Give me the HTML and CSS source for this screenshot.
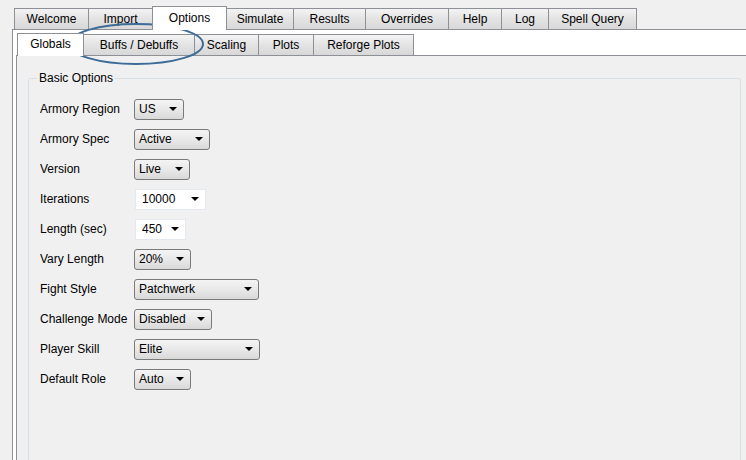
FILE: index.html
```html
<!doctype html>
<html lang="en">
	<head>
		<meta charset="UTF-8" />
		<title>Options</title>
		<link rel="stylesheet" href="styles.css">
	</head>
	<body>
		<div class="window">
			<div class="tabs">
				<div class="tab t-welcome">Welcome</div>
				<div class="tab t-import">Import</div>
				<div class="tab active t-options">Options</div>
				<div class="tab t-simulate">Simulate</div>
				<div class="tab t-results">Results</div>
				<div class="tab t-overrides">Overrides</div>
				<div class="tab t-help">Help</div>
				<div class="tab t-log">Log</div>
				<div class="tab t-spell">Spell Query</div>
			</div>

			<div class="pane">
				<div class="subtabs">
					<div class="subtab active s-globals">Globals</div>
					<div class="subtab s-buffs">Buffs / Debuffs</div>
					<div class="subtab s-scaling">Scaling</div>
					<div class="subtab s-plots">Plots</div>
					<div class="subtab s-reforge">Reforge Plots</div>
				</div>

				<div class="subpane">
					<fieldset class="group">
						<legend>Basic Options</legend>
						<div class="form">
							<div class="row"><span class="label">Armory Region</span><span class="combo w-50">US</span></div>
							<div class="row"><span class="label">Armory Spec</span><span class="combo w-76">Active</span></div>
							<div class="row"><span class="label">Version</span><span class="combo w-56">Live</span></div>
							<div class="row"><span class="label">Iterations</span><span class="combo edit w-71">10000</span></div>
							<div class="row"><span class="label">Length (sec)</span><span class="combo edit w-51">450</span></div>
							<div class="row"><span class="label">Vary Length</span><span class="combo w-57">20%</span></div>
							<div class="row"><span class="label">Fight Style</span><span class="combo w-125">Patchwerk</span></div>
							<div class="row"><span class="label">Challenge Mode</span><span class="combo w-78">Disabled</span></div>
							<div class="row"><span class="label">Player Skill</span><span class="combo w-126">Elite</span></div>
							<div class="row"><span class="label">Default Role</span><span class="combo w-57">Auto</span></div>
						</div>
					</fieldset>
				</div>
			</div>
		</div>

		<!-- annotation drawn over the screenshot -->
		<svg class="callout" width="746" height="460" viewBox="0 0 746 460">
			<ellipse cx="136" cy="44" rx="67" ry="20" fill="none" stroke="#3d6b98" stroke-width="2" />
		</svg>
	</body>
</html>
```

FILE: styles.css
```css
html,
body {
	margin: 0;
	padding: 0;
}

body {
	position: relative;
	width: 746px;
	height: 460px;
	overflow: hidden;
	background: #f0f0f0;
	font-family: "Liberation Sans", Arial, sans-serif;
	font-size: 12px;
	color: #000;
}

.window {
	display: flex;
	flex-direction: column;
	box-sizing: border-box;
	padding-top: 6px;
	height: 460px;
	overflow: hidden;
}

/* top level tabs */
.tabs {
	display: flex;
	align-items: flex-end;
	height: 23px;
	padding-left: 14px;
}

.tab {
	box-sizing: border-box;
	height: 21px;
	line-height: 21px;
	text-align: center;
	border: 1px solid #8e9097;
	border-bottom: none;
	margin-right: -1px;
	background: linear-gradient(#f3f3f3, #e3e3e3 50%, #d8d8d8);
}

.tab.active {
	position: relative;
	height: 24px;
	line-height: 23px;
	margin-bottom: -1px;
	background: #fff;
	z-index: 1;
}

.t-welcome { width: 75px; }
.t-import { width: 65px; }
.t-options { width: 75px; }
.t-simulate { width: 68px; }
.t-results { width: 73px; }
.t-overrides { width: 84px; }
.t-help { width: 54px; }
.t-log { width: 48px; }
.t-spell { width: 89px; }

.pane {
	flex: 1;
	display: flex;
	flex-direction: column;
	min-height: 0;
	margin-left: 12px;
	border-top: 1px solid #8e9097;
	border-left: 1px solid #8e9097;
	background: #fff;
}

/* second level tabs */
.subtabs {
	display: flex;
	align-items: flex-end;
	height: 25px;
	padding-left: 4px;
}

.subtab {
	box-sizing: border-box;
	height: 21px;
	line-height: 20px;
	text-align: center;
	border: 1px solid #8e9097;
	border-bottom: none;
	margin-right: -1px;
	background: linear-gradient(#f3f3f3, #e3e3e3 50%, #d8d8d8);
}

.subtab.active {
	position: relative;
	height: 23px;
	line-height: 21px;
	margin-bottom: -1px;
	background: #fff;
	z-index: 1;
}

.s-globals { width: 67px; }
.s-buffs { width: 112px; }
.s-scaling { width: 65px; }
.s-plots { width: 56px; }
.s-reforge { width: 101px; }

.subpane {
	flex: 1;
	min-height: 0;
	overflow: hidden;
	margin-left: 3px;
	border-top: 1px solid #8e9097;
	border-left: 1px solid #8e9097;
	background: #f0f0f0;
	padding: 15px 5px 0 11px;
}

.group {
	margin: 0;
	height: 420px;
	border: 1px solid #d5dfe5;
	border-radius: 3px;
	padding: 0 0 0 11px;
}

.group legend {
	padding: 0 2px;
	margin-left: -3px;
	line-height: 14px;
}

.form {
	display: flex;
	flex-direction: column;
	padding-top: 9px;
}

.row {
	display: flex;
	align-items: center;
	height: 30px;
}

.label {
	width: 94px;
}

.combo {
	position: relative;
	box-sizing: border-box;
	height: 21px;
	line-height: 19px;
	padding-left: 4px;
	border: 1px solid #7a7a7a;
	border-radius: 3px;
	background: linear-gradient(#f4f4f4, #e8e8e8 50%, #d9d9d9);
}

.combo::after {
	content: "";
	position: absolute;
	right: 6px;
	top: 7px;
	border-left: 4px solid transparent;
	border-right: 4px solid transparent;
	border-top: 4px solid #000;
}

.combo.edit {
	margin-left: 1px;
	padding-left: 6px;
	border: 1px solid #e3e9ef;
	border-radius: 0;
	background: #fff;
}

.w-50 { width: 50px; }
.w-51 { width: 51px; }
.w-56 { width: 56px; }
.w-57 { width: 57px; }
.w-71 { width: 71px; }
.w-76 { width: 76px; }
.w-78 { width: 78px; }
.w-125 { width: 125px; }
.w-126 { width: 126px; }

.callout {
	position: absolute;
	left: 0;
	top: 0;
	pointer-events: none;
}
```
